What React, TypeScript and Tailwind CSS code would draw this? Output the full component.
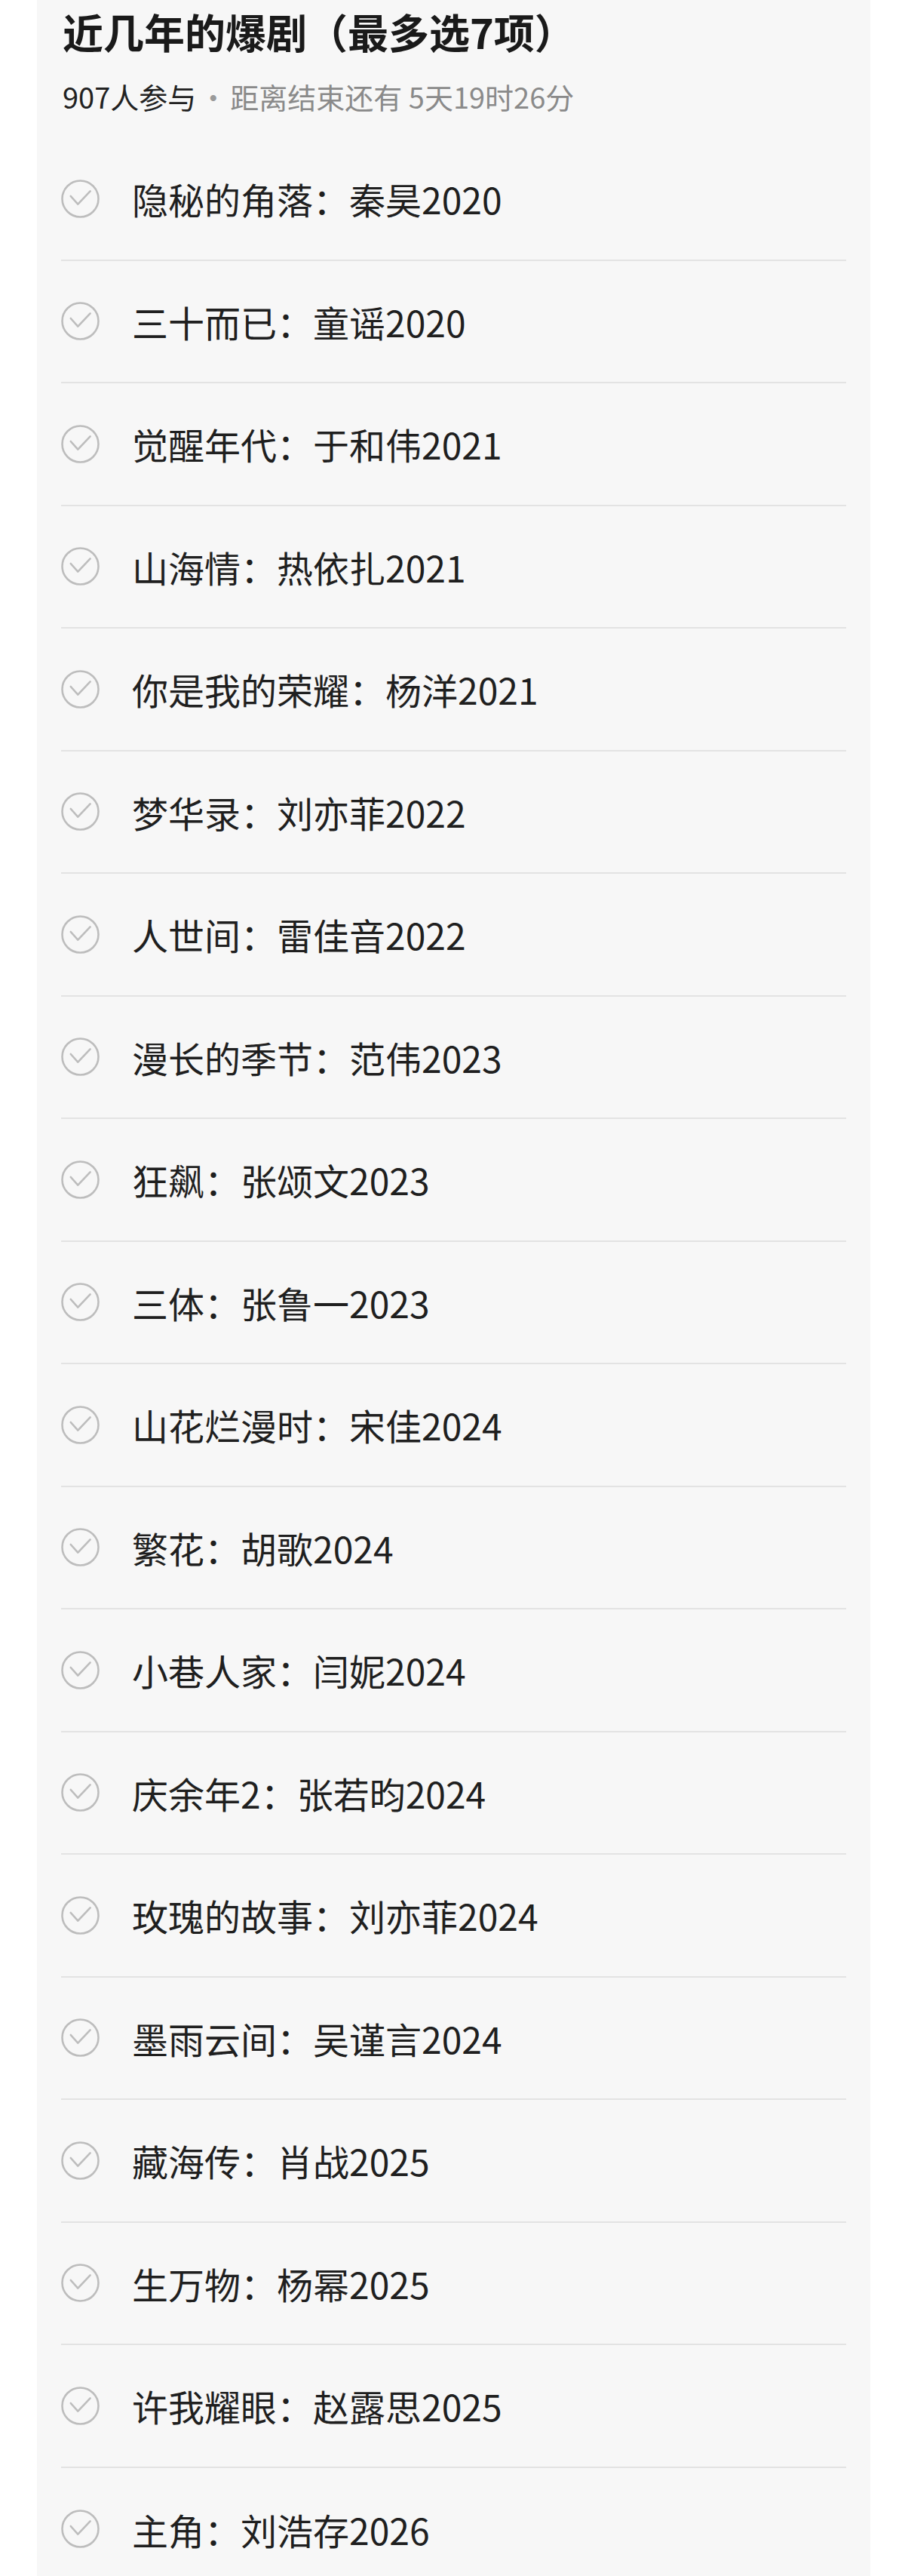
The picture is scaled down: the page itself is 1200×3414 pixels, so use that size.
const items = [
  '隐秘的角落：秦昊2020',
  '三十而已：童谣2020',
  '觉醒年代：于和伟2021',
  '山海情：热依扎2021',
  '你是我的荣耀：杨洋2021',
  '梦华录：刘亦菲2022',
  '人世间：雷佳音2022',
  '漫长的季节：范伟2023',
  '狂飙：张颂文2023',
  '三体：张鲁一2023',
  '山花烂漫时：宋佳2024',
  '繁花：胡歌2024',
  '小巷人家：闫妮2024',
  '庆余年2：张若昀2024',
  '玫瑰的故事：刘亦菲2024',
  '墨雨云间：吴谨言2024',
  '藏海传：肖战2025',
  '生万物：杨幂2025',
  '许我耀眼：赵露思2025',
  '主角：刘浩存2026',
];

const CheckCircle = () => (
  <svg width="51" height="51" viewBox="0 0 51 51" fill="none" className="shrink-0">
    <circle cx="25.5" cy="25.5" r="24" stroke="#bdbdbd" strokeWidth="2.6" />
    <path
      d="M12.8 22 L22.3 32.6 L38.6 15.4"
      stroke="#bdbdbd"
      strokeWidth="2.6"
      strokeLinecap="round"
      strokeLinejoin="round"
    />
  </svg>
);

export default function App() {
  return (
    <div
      className="min-h-screen bg-white"
      style={{ fontFamily: '"Noto Sans CJK SC", "Noto Sans", sans-serif' }}
    >
      <div className="ml-[49px] w-[1105px] bg-[#f7f7f7] px-[32px]">
        <div className="pt-[6px] pb-[31px] pl-[2px]">
          <h1 className="text-[54px] leading-[72px] font-bold text-[#1a1a1a]">
            近几年的爆剧（最多选7项）
          </h1>
          <p className="mt-[26px] flex text-[38px] leading-[48px]">
            <span className="text-[#222]">907人参与</span>
            <span className="w-[45px] text-center text-[#9a9a9a]">·</span>
            <span className="text-[#8a8a8a]">距离结束还有 5天19时26分</span>
          </p>
        </div>

        <ul>
          {items.map((item, i) => (
            <li
              key={i}
              className={
                'flex h-[162.5px] items-center ' +
                (i < items.length - 1 ? 'border-b-2 border-[#e3e3e3]' : '')
              }
            >
              <CheckCircle />
              <span className="ml-[43px] text-[48px] leading-none text-[#1f1f1f]">{item}</span>
            </li>
          ))}
        </ul>
      </div>
    </div>
  );
}
